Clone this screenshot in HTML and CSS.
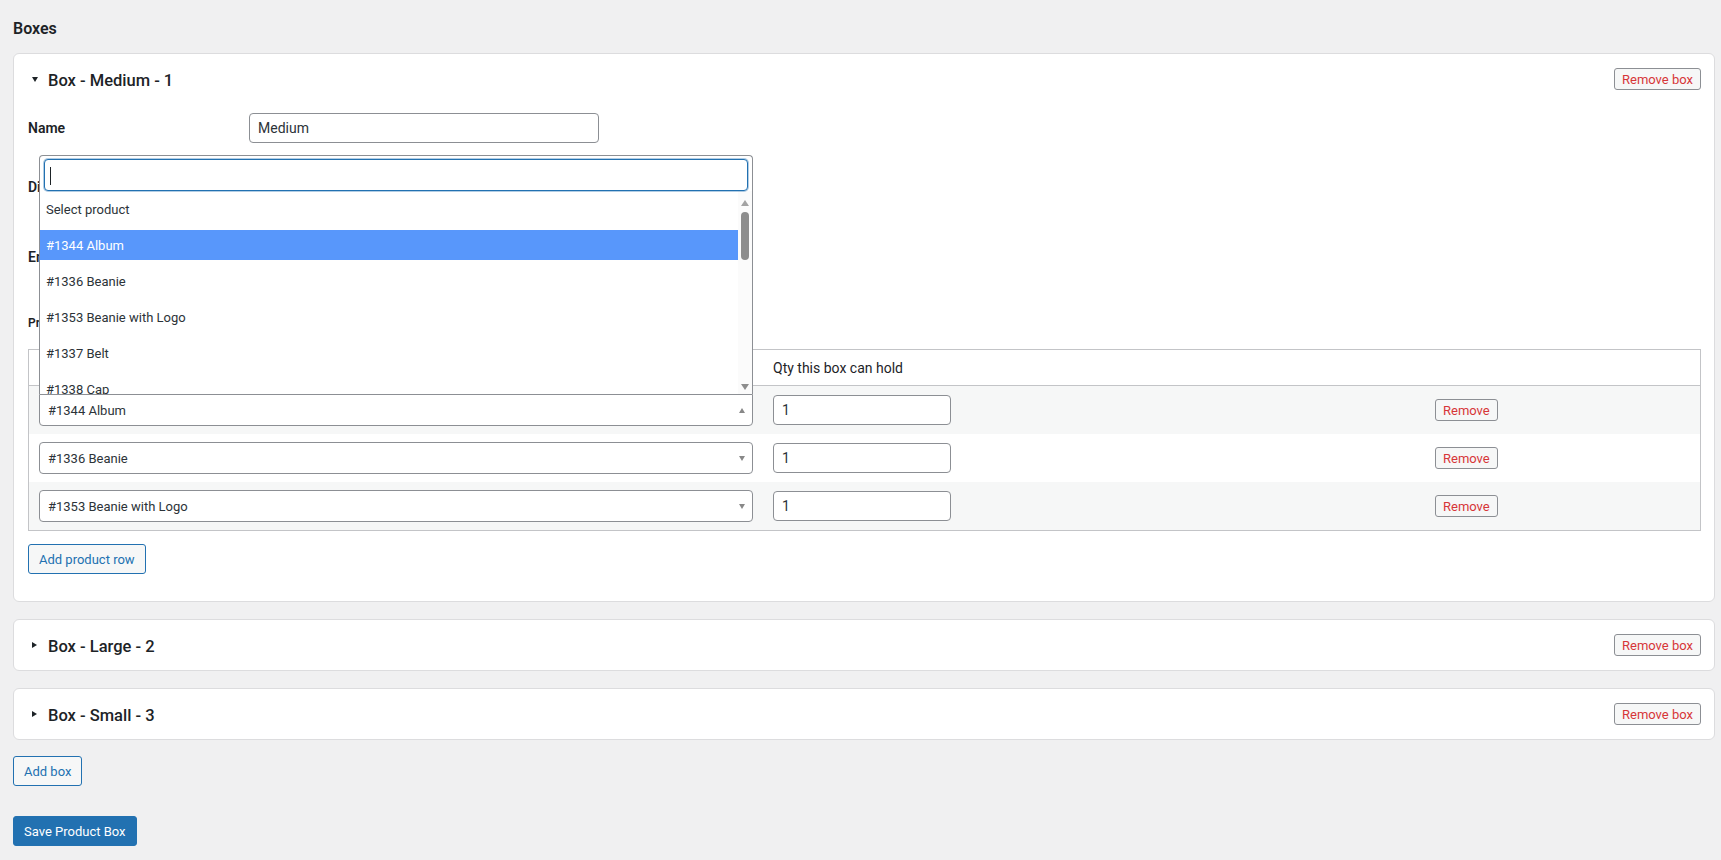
FILE: index.html
```html
<!DOCTYPE html>
<html lang="en">
<head>
<meta charset="utf-8">
<title>Product boxes</title>
<link rel="stylesheet" href="styles.css">
</head>
<body>
<main class="page">
  <h2 class="page-title">Boxes</h2>

  <div class="box-list">
    <section class="box-card is-open">
      <header class="box-head">
        <span class="toggle toggle-open"></span>
        <h3 class="box-title">Box - Medium - 1</h3>
        <button class="btn btn-remove" type="button">Remove box</button>
      </header>

      <div class="box-body">
        <div class="field-row row-name">
          <label class="field-label" for="box-name-1">Name</label>
          <input class="text-input name-input" id="box-name-1" type="text" value="Medium">
        </div>

        <div class="field-row row-dims">
          <span class="field-label">Dimensions (cm)</span>
          <div class="dims">
            <input class="text-input dim-input" type="text" value="30" aria-label="Length">
            <input class="text-input dim-input" type="text" value="20" aria-label="Width">
            <input class="text-input dim-input" type="text" value="15" aria-label="Height">
          </div>
        </div>

        <div class="field-row row-enabled">
          <label class="field-label" for="box-enabled-1">Enabled</label>
          <input class="check" id="box-enabled-1" type="checkbox" checked>
        </div>

        <h4 class="products-label">Products in this box</h4>

        <table class="products-table">
          <thead>
            <tr>
              <th class="th-product">Product</th>
              <th class="th-qty">Qty this box can hold</th>
              <th class="th-action"></th>
            </tr>
          </thead>
          <tbody>
            <tr>
              <td>
                <div class="select-wrap">
                  <div class="select-dropdown">
                    <div class="dropdown-search">
                      <input class="search-field" type="search" aria-label="Search products">
                      <span class="search-caret"></span>
                    </div>
                    <div class="dropdown-results">
                      <ul class="options">
                        <li class="option">Select product</li>
                        <li class="option is-highlighted">#1344 Album</li>
                        <li class="option">#1336 Beanie</li>
                        <li class="option">#1353 Beanie with Logo</li>
                        <li class="option">#1337 Belt</li>
                        <li class="option">#1338 Cap</li>
                        <li class="option">#1340 Hoodie</li>
                      </ul>
                      <div class="scrollbar">
                        <span class="sb-arrow sb-up"></span>
                        <span class="sb-thumb"></span>
                        <span class="sb-arrow sb-down"></span>
                      </div>
                    </div>
                  </div>
                  <div class="select-box is-open">
                    <span class="select-value">#1344 Album</span>
                    <span class="select-arrow arrow-up"></span>
                  </div>
                </div>
              </td>
              <td><input class="text-input qty-input" type="text" value="1" aria-label="Quantity"></td>
              <td><button class="btn btn-remove" type="button">Remove</button></td>
            </tr>
            <tr>
              <td>
                <div class="select-box">
                  <span class="select-value">#1336 Beanie</span>
                  <span class="select-arrow"></span>
                </div>
              </td>
              <td><input class="text-input qty-input" type="text" value="1" aria-label="Quantity"></td>
              <td><button class="btn btn-remove" type="button">Remove</button></td>
            </tr>
            <tr>
              <td>
                <div class="select-box">
                  <span class="select-value">#1353 Beanie with Logo</span>
                  <span class="select-arrow"></span>
                </div>
              </td>
              <td><input class="text-input qty-input" type="text" value="1" aria-label="Quantity"></td>
              <td><button class="btn btn-remove" type="button">Remove</button></td>
            </tr>
          </tbody>
        </table>

        <button class="btn btn-secondary add-row" type="button">Add product row</button>
      </div>
    </section>

    <section class="box-card">
      <header class="box-head">
        <span class="toggle toggle-closed"></span>
        <h3 class="box-title">Box - Large - 2</h3>
        <button class="btn btn-remove" type="button">Remove box</button>
      </header>
    </section>

    <section class="box-card">
      <header class="box-head">
        <span class="toggle toggle-closed"></span>
        <h3 class="box-title">Box - Small - 3</h3>
        <button class="btn btn-remove" type="button">Remove box</button>
      </header>
    </section>
  </div>

  <button class="btn btn-secondary add-box" type="button">Add box</button>

  <div class="submit-row">
    <button class="btn btn-primary" type="submit">Save Product Box</button>
  </div>
</main>
</body>
</html>
```

FILE: styles.css
```css
* {
  box-sizing: border-box;
}

html,
body {
  margin: 0;
}

body {
  background: #f0f0f1;
  color: #1d2327;
  font-family: Roboto, "Liberation Sans", sans-serif;
  font-size: 13px;
}

.page {
  padding: 18px 6px 0 13px;
}

.page-title {
  margin: 0 0 13px;
  font-size: 16px;
  line-height: 22px;
  font-weight: 600;
}

/* ---------- box cards ---------- */

.box-list {
  display: flex;
  flex-direction: column;
  gap: 17px;
}

.box-card {
  background: #fff;
  border: 1px solid #dcdcde;
  border-radius: 6px;
  padding: 14px 13px 14px 14px;
}

.box-card.is-open {
  padding-bottom: 27px;
}

.box-head {
  display: flex;
  align-items: center;
  height: 22px;
}

.toggle {
  flex: none;
  width: 0;
  height: 0;
  margin-left: 4px;
}

.toggle-open {
  border-left: 3px solid transparent;
  border-right: 3px solid transparent;
  border-top: 5px solid #1d2327;
  margin-right: 10px;
}

.toggle-closed {
  border-top: 3px solid transparent;
  border-bottom: 3px solid transparent;
  border-left: 5px solid #1d2327;
  margin-right: 11px;
}

.box-title {
  flex: 1;
  margin: 0;
  padding-top: 3px;
  font-size: 16.5px;
  line-height: 22px;
  font-weight: 500;
}

/* ---------- buttons ---------- */

.btn {
  display: inline-flex;
  align-items: center;
  justify-content: center;
  font-family: inherit;
  font-size: 13px;
  border-radius: 3px;
  cursor: pointer;
  white-space: nowrap;
}

.btn-remove {
  height: 22px;
  padding: 0 7px;
  border: 1px solid #8c8f94;
  background: #f6f7f7;
  color: #d63638;
}

.btn-secondary {
  height: 30px;
  padding: 0 10px;
  border: 1px solid #2271b1;
  background: #f6f7f7;
  color: #2271b1;
}

.btn-primary {
  height: 30px;
  padding: 0 10px;
  border: 1px solid #2271b1;
  background: #2271b1;
  color: #fff;
}

.add-row {
  margin-top: 13px;
}

.add-box {
  margin-top: 16px;
}

.submit-row {
  margin-top: 30px;
}

/* ---------- form rows ---------- */

.field-row {
  display: flex;
  align-items: center;
  height: 30px;
}

.field-label {
  flex: none;
  width: 221px;
  font-size: 14px;
  font-weight: 600;
}

.row-name {
  margin-top: 23px;
}

.row-dims {
  margin-top: 29px;
}

.row-enabled {
  margin-top: 40px;
}

.text-input {
  height: 30px;
  padding: 0 8px;
  border: 1px solid #8c8f94;
  border-radius: 4px;
  background: #fff;
  color: #2c3338;
  font-family: inherit;
  font-size: 14px;
}

.name-input {
  width: 350px;
}

.dims {
  display: flex;
  gap: 8px;
}

.dim-input {
  width: 100px;
}

.check {
  width: 16px;
  height: 16px;
  margin: 0;
}

.products-label {
  margin: 41px 0 0;
  font-size: 12px;
  line-height: 20px;
  font-weight: 600;
}

/* ---------- products table ---------- */

.products-table {
  width: 100%;
  margin-top: 16px;
  border: 1px solid #c3c4c7;
  border-collapse: separate;
  border-spacing: 0;
  table-layout: fixed;
}

.products-table th {
  height: 36px;
  padding: 0 10px;
  border-bottom: 1px solid #c3c4c7;
  text-align: left;
  font-size: 14px;
  font-weight: 400;
}

.th-product {
  width: 734px;
}

.th-qty {
  width: 662px;
}

.products-table td {
  height: 48px;
  padding: 0 10px;
  vertical-align: middle;
}

.products-table tbody tr:nth-child(odd) td {
  background: #f6f7f7;
}

.qty-input {
  width: 178px;
}

/* ---------- product select ---------- */

.select-wrap {
  position: relative;
}

.select-box {
  display: flex;
  align-items: center;
  height: 32px;
  padding: 0 7px 0 8px;
  border: 1px solid #8c8f94;
  border-radius: 4px;
  background: #fff;
  color: #2c3338;
  font-size: 13px;
}

.select-box.is-open {
  border-top-left-radius: 0;
  border-top-right-radius: 0;
}

.select-value {
  flex: 1;
}

.select-arrow {
  width: 0;
  height: 0;
  border-left: 3px solid transparent;
  border-right: 3px solid transparent;
  border-top: 5px solid #888;
}

.select-arrow.arrow-up {
  border-top: 0;
  border-bottom: 5px solid #888;
}

/* open results panel, drawn above its select */
.select-dropdown {
  position: absolute;
  left: 0;
  right: 0;
  bottom: 100%;
  z-index: 10;
  background: #fff;
  border: 1px solid #8c8f94;
  border-bottom: 0;
  border-radius: 4px 4px 0 0;
}

.dropdown-search {
  position: relative;
  padding: 3px 4px 0;
}

.search-field {
  display: block;
  width: 100%;
  height: 32px;
  padding: 0 6px;
  border: 1px solid #2271b1;
  border-radius: 4px;
  box-shadow: 0 0 0 1px rgba(34, 113, 177, 0.35);
  outline: none;
  caret-color: transparent;
  font-family: inherit;
  font-size: 13px;
}

.search-caret {
  position: absolute;
  left: 10px;
  top: 11px;
  width: 1px;
  height: 18px;
  background: #1d2327;
}

.dropdown-results {
  display: flex;
  height: 203px;
}

.options {
  flex: 1;
  display: flex;
  flex-direction: column;
  gap: 6px;
  margin: 0;
  padding: 3px 0 0;
  list-style: none;
  overflow: hidden;
}

.option {
  flex: none;
  height: 30px;
  line-height: 32px;
  padding: 0 6px;
  color: #2c3338;
  font-size: 13px;
}

.option.is-highlighted {
  background: #5897fb;
  color: #fff;
}

.scrollbar {
  flex: none;
  width: 14px;
  display: flex;
  flex-direction: column;
  align-items: center;
  background: #fbfbfb;
}

.sb-arrow {
  width: 0;
  height: 0;
  border-left: 4px solid transparent;
  border-right: 4px solid transparent;
}

.sb-up {
  margin-top: 9px;
  border-bottom: 6px solid #a3a3a3;
}

.sb-thumb {
  width: 8px;
  height: 48px;
  margin-top: 6px;
  border-radius: 4px;
  background: #8d8d8d;
}

.sb-down {
  margin-top: auto;
  margin-bottom: 4px;
  border-top: 6px solid #8d8d8d;
}
```
